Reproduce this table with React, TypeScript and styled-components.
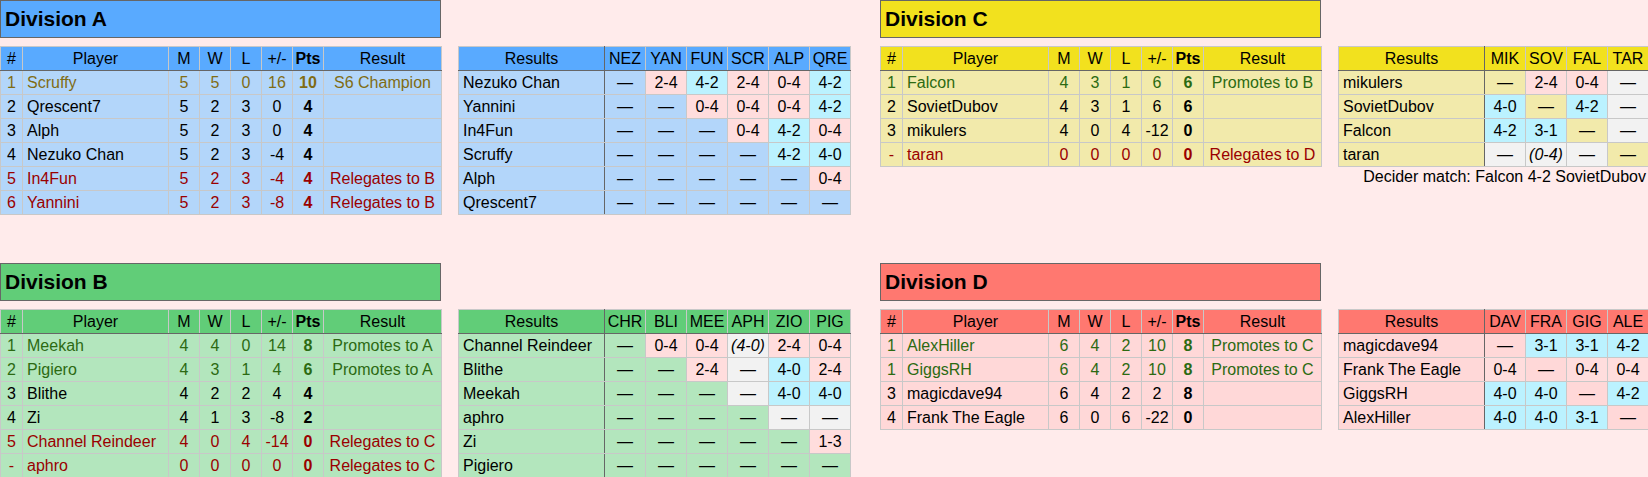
import React from "react";
import styled, { createGlobalStyle } from "styled-components";

const GlobalStyle = createGlobalStyle`
  html, body { margin: 0; padding: 0; background: #ffebeb; }
  body { font-family: "Liberation Sans", Arial, sans-serif; font-size: 16px; color: #000; }
`;

type Tone = "champ" | "up" | "down" | undefined;
type Kind = "win" | "loss" | "gray" | "none";

interface Palette { head: string; row: string; }

const palettes: Record<string, Palette> = {
  A: { head: "#59aaff", row: "#b3d6fa" },
  B: { head: "#61cd78", row: "#b3e6bd" },
  C: { head: "#f2e11e", row: "#f2eaab" },
  D: { head: "#ff7870", row: "#ffd8d8" },
};

const toneColor: Record<string, string> = {
  champ: "#806c14",
  up: "#2c6a12",
  down: "#9a0000",
};

const kindBg: Record<Kind, string | null> = {
  win: "#bbf2ff",
  loss: "#ffdddd",
  gray: "#f2f2f2",
  none: null,
};

const Grid = styled.div`
  display: grid;
  grid-template-columns: 850px 767px;
  column-gap: 30px;
  row-gap: 48px;
  align-items: start;
`;

const Division = styled.section`
  display: flex;
  flex-direction: column;
  gap: 8px;
`;

const DivisionHeader = styled.h2<{ $bg: string }>`
  box-sizing: border-box;
  width: 441px;
  height: 38px;
  margin: 0;
  padding: 0 4px;
  display: flex;
  align-items: center;
  background: ${(p) => p.$bg};
  border: 1px solid #666;
  font-size: 21px;
  font-weight: bold;
`;

const TablesRow = styled.div`
  display: flex;
  align-items: flex-start;
  gap: 16px;
`;

const ResultsColumn = styled.div`
  display: flex;
  flex-direction: column;
`;

const Table = styled.table<{ $w: number }>`
  width: ${(p) => p.$w}px;
  table-layout: fixed;
  border-collapse: collapse;
  border: 1px solid #666;
  font-size: 16px;
`;

const HeadCell = styled.th<{ $bg: string; $bold?: boolean; $divider?: boolean }>`
  height: 23px;
  padding: 0;
  background: ${(p) => p.$bg};
  font-weight: ${(p) => (p.$bold ? "bold" : "normal")};
  text-align: center;
  border: 1px solid #c8c8c8;
  border-bottom: 1px solid #666;
  ${(p) => (p.$divider ? "border-right: 1px solid #666;" : "")}
  white-space: nowrap;
  overflow: hidden;
`;

const Row = styled.tr<{ $bg: string; $tone?: Tone }>`
  background: ${(p) => p.$bg};
  color: ${(p) => (p.$tone ? toneColor[p.$tone] : "#000")};
`;

const Cell = styled.td<{ $align?: "left" | "center"; $bold?: boolean; $divider?: boolean }>`
  height: 23px;
  padding: 0 ${(p) => (p.$align === "left" ? "4px" : "0")};
  text-align: ${(p) => p.$align ?? "center"};
  font-weight: ${(p) => (p.$bold ? "bold" : "normal")};
  border: 1px solid #c8c8c8;
  ${(p) => (p.$divider ? "border-right: 1px solid #666;" : "")}
  white-space: nowrap;
  overflow: hidden;
`;

const ScoreCell = styled.td<{ $kind: Kind; $italic?: boolean }>`
  height: 23px;
  padding: 0;
  text-align: center;
  border: 1px solid #c8c8c8;
  ${(p) => (kindBg[p.$kind] ? `background: ${kindBg[p.$kind]};` : "")}
  font-style: ${(p) => (p.$italic ? "italic" : "normal")};
  white-space: nowrap;
`;

const Note = styled.div`
  text-align: right;
  padding: 1px 3px 0 0;
  font-size: 16px;
  line-height: 18px;
`;

type Standing = [string, string, number, number, number, number, number, string, Tone];
type Score = [string, Kind] | [string, Kind, boolean];
type ResultRow = [string, Score[]];

interface DivisionData {
  key: string;
  title: string;
  standings: Standing[];
  codes: string[];
  results: ResultRow[];
  note?: string;
}

const D = "—";
const n = (): Score => [D, "none"];
const g = (): Score => [D, "gray"];
const w = (s: string): Score => [s, "win"];
const l = (s: string): Score => [s, "loss"];

const divisions: DivisionData[] = [
  {
    key: "A",
    title: "Division A",
    standings: [
      ["1", "Scruffy", 5, 5, 0, 16, 10, "S6 Champion", "champ"],
      ["2", "Qrescent7", 5, 2, 3, 0, 4, "", undefined],
      ["3", "Alph", 5, 2, 3, 0, 4, "", undefined],
      ["4", "Nezuko Chan", 5, 2, 3, -4, 4, "", undefined],
      ["5", "In4Fun", 5, 2, 3, -4, 4, "Relegates to B", "down"],
      ["6", "Yannini", 5, 2, 3, -8, 4, "Relegates to B", "down"],
    ],
    codes: ["NEZ", "YAN", "FUN", "SCR", "ALP", "QRE"],
    results: [
      ["Nezuko Chan", [n(), l("2-4"), w("4-2"), l("2-4"), l("0-4"), w("4-2")]],
      ["Yannini", [n(), n(), l("0-4"), l("0-4"), l("0-4"), w("4-2")]],
      ["In4Fun", [n(), n(), n(), l("0-4"), w("4-2"), l("0-4")]],
      ["Scruffy", [n(), n(), n(), n(), w("4-2"), w("4-0")]],
      ["Alph", [n(), n(), n(), n(), n(), l("0-4")]],
      ["Qrescent7", [n(), n(), n(), n(), n(), n()]],
    ],
  },
  {
    key: "C",
    title: "Division C",
    standings: [
      ["1", "Falcon", 4, 3, 1, 6, 6, "Promotes to B", "up"],
      ["2", "SovietDubov", 4, 3, 1, 6, 6, "", undefined],
      ["3", "mikulers", 4, 0, 4, -12, 0, "", undefined],
      ["-", "taran", 0, 0, 0, 0, 0, "Relegates to D", "down"],
    ],
    codes: ["MIK", "SOV", "FAL", "TAR"],
    results: [
      ["mikulers", [n(), l("2-4"), l("0-4"), g()]],
      ["SovietDubov", [w("4-0"), n(), w("4-2"), g()]],
      ["Falcon", [w("4-2"), w("3-1"), n(), g()]],
      ["taran", [g(), ["(0-4)", "gray", true], g(), n()]],
    ],
    note: "Decider match: Falcon 4-2 SovietDubov",
  },
  {
    key: "B",
    title: "Division B",
    standings: [
      ["1", "Meekah", 4, 4, 0, 14, 8, "Promotes to A", "up"],
      ["2", "Pigiero", 4, 3, 1, 4, 6, "Promotes to A", "up"],
      ["3", "Blithe", 4, 2, 2, 4, 4, "", undefined],
      ["4", "Zi", 4, 1, 3, -8, 2, "", undefined],
      ["5", "Channel Reindeer", 4, 0, 4, -14, 0, "Relegates to C", "down"],
      ["-", "aphro", 0, 0, 0, 0, 0, "Relegates to C", "down"],
    ],
    codes: ["CHR", "BLI", "MEE", "APH", "ZIO", "PIG"],
    results: [
      ["Channel Reindeer", [n(), l("0-4"), l("0-4"), ["(4-0)", "gray", true], l("2-4"), l("0-4")]],
      ["Blithe", [n(), n(), l("2-4"), g(), w("4-0"), l("2-4")]],
      ["Meekah", [n(), n(), n(), g(), w("4-0"), w("4-0")]],
      ["aphro", [n(), n(), n(), n(), g(), g()]],
      ["Zi", [n(), n(), n(), n(), n(), l("1-3")]],
      ["Pigiero", [n(), n(), n(), n(), n(), n()]],
    ],
  },
  {
    key: "D",
    title: "Division D",
    standings: [
      ["1", "AlexHiller", 6, 4, 2, 10, 8, "Promotes to C", "up"],
      ["1", "GiggsRH", 6, 4, 2, 10, 8, "Promotes to C", "up"],
      ["3", "magicdave94", 6, 4, 2, 2, 8, "", undefined],
      ["4", "Frank The Eagle", 6, 0, 6, -22, 0, "", undefined],
    ],
    codes: ["DAV", "FRA", "GIG", "ALE"],
    results: [
      ["magicdave94", [n(), w("3-1"), w("3-1"), w("4-2")]],
      ["Frank The Eagle", [l("0-4"), n(), l("0-4"), l("0-4")]],
      ["GiggsRH", [w("4-0"), w("4-0"), n(), w("4-2")]],
      ["AlexHiller", [w("4-0"), w("4-0"), w("3-1"), n()]],
    ],
  },
];

const standingCols = [22, 146, 31, 31, 31, 31, 31, 118];
const standingHeads = ["#", "Player", "M", "W", "L", "+/-", "Pts", "Result"];

function Standings({ d, pal }: { d: DivisionData; pal: Palette }) {
  return (
    <Table $w={441}>
      <colgroup>
        {standingCols.map((c, i) => (
          <col key={i} style={{ width: c }} />
        ))}
      </colgroup>
      <thead>
        <tr>
          {standingHeads.map((h) => (
            <HeadCell key={h} $bg={pal.head} $bold={h === "Pts"}>
              {h}
            </HeadCell>
          ))}
        </tr>
      </thead>
      <tbody>
        {d.standings.map((s) => (
          <Row key={s[1]} $bg={pal.row} $tone={s[8]}>
            <Cell>{s[0]}</Cell>
            <Cell $align="left">{s[1]}</Cell>
            <Cell>{s[2]}</Cell>
            <Cell>{s[3]}</Cell>
            <Cell>{s[4]}</Cell>
            <Cell>{s[5]}</Cell>
            <Cell $bold>{s[6]}</Cell>
            <Cell>{s[7]}</Cell>
          </Row>
        ))}
      </tbody>
    </Table>
  );
}

function Results({ d, pal }: { d: DivisionData; pal: Palette }) {
  const width = 146 + d.codes.length * 41;
  return (
    <ResultsColumn>
      <Table $w={width}>
        <colgroup>
          <col style={{ width: 146 }} />
          {d.codes.map((c) => (
            <col key={c} style={{ width: 41 }} />
          ))}
        </colgroup>
        <thead>
          <tr>
            <HeadCell $bg={pal.head} $divider>
              Results
            </HeadCell>
            {d.codes.map((c) => (
              <HeadCell key={c} $bg={pal.head}>
                {c}
              </HeadCell>
            ))}
          </tr>
        </thead>
        <tbody>
          {d.results.map(([name, scores]) => (
            <Row key={name} $bg={pal.row}>
              <Cell $align="left" $divider>
                {name}
              </Cell>
              {scores.map((sc, i) => (
                <ScoreCell key={i} $kind={sc[1]} $italic={sc[2] === true}>
                  {sc[0]}
                </ScoreCell>
              ))}
            </Row>
          ))}
        </tbody>
      </Table>
      {d.note && <Note>{d.note}</Note>}
    </ResultsColumn>
  );
}

export default function App() {
  return (
    <>
      <GlobalStyle />
      <Grid>
        {divisions.map((d) => {
          const pal = palettes[d.key];
          return (
            <Division key={d.key}>
              <DivisionHeader $bg={pal.head}>{d.title}</DivisionHeader>
              <TablesRow>
                <Standings d={d} pal={pal} />
                <Results d={d} pal={pal} />
              </TablesRow>
            </Division>
          );
        })}
      </Grid>
    </>
  );
}
